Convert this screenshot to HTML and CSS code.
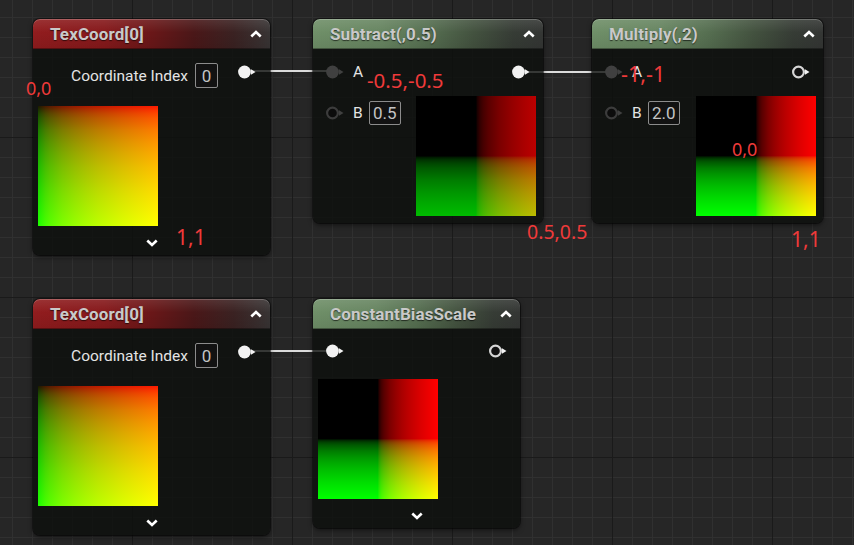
FILE: index.html
```html
<!DOCTYPE html>
<html>
<head>
<meta charset="utf-8">
<link rel="stylesheet" href="styles.css">
</head>
<body>
<div class="canvas">
  <div class="wire w1"></div>
  <div class="wire w2"></div>
  <div class="wire w3"></div>

  <!-- TexCoord top -->
  <div class="node n1">
    <div class="hdr hdr-red">
      <span class="title">TexCoord[0]</span>
      <svg class="chev" width="12" height="8" viewBox="0 0 12 8"><polyline points="1.3,6.5 6,2 10.7,6.5"/></svg>
    </div>
    <div class="body-tc">
      <div class="row-out">
        <span class="plabel">Coordinate Index</span>
        <span class="vbox vbox-sm">0</span>
        <svg class="pin pin-up" width="19" height="14" viewBox="0 0 19 14"><circle class="fill-w" cx="6.5" cy="7" r="6.4"/><polygon class="fill-w" points="13,4.2 17.5,7 13,9.8"/></svg>
      </div>
      <div class="preview prev-uv"></div>
      <div class="foot"><svg class="chev" width="12" height="8" viewBox="0 0 12 8"><polyline points="1.3,1.5 6,6 10.7,1.5"/></svg></div>
    </div>
  </div>

  <!-- Subtract -->
  <div class="node n2">
    <div class="hdr hdr-green">
      <span class="title">Subtract(,0.5)</span>
      <svg class="chev" width="12" height="8" viewBox="0 0 12 8"><polyline points="1.3,6.5 6,2 10.7,6.5"/></svg>
    </div>
    <div class="body-op">
      <div class="col-in">
        <div class="prow">
          <svg class="pin" width="19" height="14" viewBox="0 0 19 14"><circle class="fill-d" cx="6.5" cy="7" r="6.4"/><polygon class="fill-d" points="13,4.2 17.5,7 13,9.8"/></svg>
          <span class="plabel">A</span>
        </div>
        <div class="prow">
          <svg class="pin" width="19" height="14" viewBox="0 0 19 14"><circle class="ring-d" cx="6.5" cy="7" r="5.4"/><polygon class="fill-d" points="13,4.2 17.5,7 13,9.8"/></svg>
          <span class="plabel">B</span>
          <span class="vbox">0.5</span>
        </div>
      </div>
      <div class="col-out">
        <div class="prow">
          <svg class="pin" width="19" height="14" viewBox="0 0 19 14"><circle class="fill-w" cx="6.5" cy="7" r="6.4"/><polygon class="fill-w" points="13,4.2 17.5,7 13,9.8"/></svg>
        </div>
        <div class="preview prev-sub"></div>
      </div>
    </div>
  </div>

  <!-- Multiply -->
  <div class="node n3">
    <div class="hdr hdr-green">
      <span class="title">Multiply(,2)</span>
      <svg class="chev" width="12" height="8" viewBox="0 0 12 8"><polyline points="1.3,6.5 6,2 10.7,6.5"/></svg>
    </div>
    <div class="body-op">
      <div class="col-in">
        <div class="prow">
          <svg class="pin" width="19" height="14" viewBox="0 0 19 14"><circle class="fill-d" cx="6.5" cy="7" r="6.4"/><polygon class="fill-d" points="13,4.2 17.5,7 13,9.8"/></svg>
          <span class="plabel">A</span>
        </div>
        <div class="prow">
          <svg class="pin" width="19" height="14" viewBox="0 0 19 14"><circle class="ring-d" cx="6.5" cy="7" r="5.4"/><polygon class="fill-d" points="13,4.2 17.5,7 13,9.8"/></svg>
          <span class="plabel">B</span>
          <span class="vbox">2.0</span>
        </div>
      </div>
      <div class="col-out">
        <div class="prow">
          <svg class="pin" width="19" height="14" viewBox="0 0 19 14"><circle class="ring-w" cx="6.5" cy="7" r="5.4"/><polygon class="fill-w" points="13,4.2 17.5,7 13,9.8"/></svg>
        </div>
        <div class="preview prev-mul"></div>
      </div>
    </div>
  </div>

  <!-- TexCoord bottom -->
  <div class="node n4">
    <div class="hdr hdr-red">
      <span class="title">TexCoord[0]</span>
      <svg class="chev" width="12" height="8" viewBox="0 0 12 8"><polyline points="1.3,6.5 6,2 10.7,6.5"/></svg>
    </div>
    <div class="body-tc">
      <div class="row-out">
        <span class="plabel">Coordinate Index</span>
        <span class="vbox vbox-sm">0</span>
        <svg class="pin pin-up" width="19" height="14" viewBox="0 0 19 14"><circle class="fill-w" cx="6.5" cy="7" r="6.4"/><polygon class="fill-w" points="13,4.2 17.5,7 13,9.8"/></svg>
      </div>
      <div class="preview prev-uv"></div>
      <div class="foot"><svg class="chev" width="12" height="8" viewBox="0 0 12 8"><polyline points="1.3,1.5 6,6 10.7,1.5"/></svg></div>
    </div>
  </div>

  <!-- ConstantBiasScale -->
  <div class="node n5">
    <div class="hdr hdr-green">
      <span class="title">ConstantBiasScale</span>
      <svg class="chev" width="12" height="8" viewBox="0 0 12 8"><polyline points="1.3,6.5 6,2 10.7,6.5"/></svg>
    </div>
    <div class="body-cbs">
      <div class="row-io">
        <svg class="pin" width="19" height="14" viewBox="0 0 19 14"><circle class="fill-w" cx="6.5" cy="7" r="6.4"/><polygon class="fill-w" points="13,4.2 17.5,7 13,9.8"/></svg>
        <svg class="pin" width="19" height="14" viewBox="0 0 19 14"><circle class="ring-w" cx="6.5" cy="7" r="5.4"/><polygon class="fill-w" points="13,4.2 17.5,7 13,9.8"/></svg>
      </div>
      <div class="preview prev-mul"></div>
      <div class="foot foot-cbs"><svg class="chev" width="12" height="8" viewBox="0 0 12 8"><polyline points="1.3,1.5 6,6 10.7,1.5"/></svg></div>
    </div>
  </div>

  <!-- annotations -->
  <span class="anno a00">0,0</span>
  <span class="anno a11">1,1</span>
  <span class="anno asub">-0.5,-0.5</span>
  <span class="anno a55">0.5,0.5</span>
  <span class="anno amul">-1,-1</span>
  <span class="anno a00b">0,0</span>
  <span class="anno a11b">1,1</span>
</div>
</body>
</html>
```

FILE: styles.css
```css
html, body {
  margin: 0;
  padding: 0;
}
body {
  width: 854px;
  height: 545px;
  overflow: hidden;
  background-color: #262626;
  background-image:
    linear-gradient(to right, #1a1a1a 1px, transparent 1px),
    linear-gradient(to bottom, #1a1a1a 1px, transparent 1px),
    linear-gradient(to right, #303030 1px, transparent 1px),
    linear-gradient(to bottom, #303030 1px, transparent 1px);
  background-size: 160px 160px, 160px 160px, 20px 20px, 20px 20px;
  background-position: 132px 0, 0 137px, 12px 0, 0 17px;
  font-family: Roboto, "Liberation Sans", sans-serif;
}
.canvas {
  position: relative;
  width: 854px;
  height: 545px;
}

/* wires (behind nodes) */
.wire {
  position: absolute;
  height: 2px;
  background: #dcdcdc;
}
.w1 { left: 252px; top: 70px; width: 76px; }
.w2 { left: 526px; top: 71px; width: 82px; }
.w3 { left: 252px; top: 350px; width: 76px; }

/* nodes */
.node {
  position: absolute;
  display: flex;
  flex-direction: column;
  border-radius: 7px;
  background: rgba(13, 15, 13, 0.8);
  box-shadow: 0 2px 5px rgba(0, 0, 0, 0.55), 0 0 0 1px rgba(0, 0, 0, 0.45);
}
.n1 { left: 33px; top: 19px; width: 237px; height: 236px; }
.n2 { left: 313px; top: 19px; width: 230px; height: 204px; }
.n3 { left: 592px; top: 19px; width: 231px; height: 204px; }
.n4 { left: 33px; top: 299px; width: 237px; height: 236px; }
.n5 { left: 313px; top: 299px; width: 207px; height: 229px; }

.hdr {
  height: 30px;
  flex: none;
  display: flex;
  align-items: center;
  justify-content: space-between;
  padding: 0 8px 0 17px;
  border-radius: 7px 7px 0 0;
  box-shadow: inset 0 1px 0 rgba(255, 255, 255, 0.22), inset 0 -1px 0 rgba(0, 0, 0, 0.35);
}
.hdr-red {
  background:
    linear-gradient(to bottom, rgba(255, 255, 255, 0.10), rgba(255, 255, 255, 0) 45%, rgba(0, 0, 0, 0.08)),
    linear-gradient(to right, #911c1e 0%, #86191b 30%, #6a1718 50%, #4a1718 68%, #3a2222 85%, #383434 100%);
}
.hdr-green {
  background:
    linear-gradient(to bottom, rgba(255, 255, 255, 0.10), rgba(255, 255, 255, 0) 45%, rgba(0, 0, 0, 0.08)),
    linear-gradient(to right, #6f8f68 0%, #678561 30%, #566f51 50%, #43523f 70%, #363c35 87%, #343634 100%);
}
.title {
  color: #c9c9c9;
  font-weight: 700;
  font-size: 17px;
  letter-spacing: 0.1px;
  text-shadow: 0 1px 1px rgba(0, 0, 0, 0.6);
  white-space: nowrap;
}
.chev polyline {
  fill: none;
  stroke: #ffffff;
  stroke-width: 2.6;
  stroke-linecap: butt;
  stroke-linejoin: miter;
}

.plabel {
  color: #e4e4e4;
  font-size: 15.5px;
  white-space: nowrap;
}
.vbox {
  box-sizing: border-box;
  height: 24px;
  min-width: 32px;
  padding: 0 3px;
  border: 1px solid #8c8c8c;
  border-radius: 2px;
  background: #121212;
  color: #c4c4c4;
  font-size: 17px;
  display: inline-flex;
  align-items: center;
  justify-content: center;
}
.vbox-sm {
  min-width: 23px;
  height: 25px;
}

.pin { display: block; flex: none; }
.fill-w { fill: #f2f2f2; }
.fill-d { fill: #404040; }
.ring-w { fill: #121212; stroke: #d6d6d6; stroke-width: 2.2; }
.ring-d { fill: #0c0c0c; stroke: #3c3c3c; stroke-width: 2.2; }

/* TexCoord body */
.body-tc {
  flex: 1;
  display: flex;
  flex-direction: column;
  padding: 14px 0 0 5px;
}
.row-out {
  display: flex;
  align-items: center;
  justify-content: flex-end;
  height: 25px;
  padding-right: 13px;
}
.row-out .vbox { margin-left: 7px; }
.row-out .pin { margin-left: 20px; align-self: flex-start; margin-top: 2px; }
.body-tc .preview { margin-top: 18px; }
.foot {
  flex: 1;
  display: flex;
  align-items: center;
  justify-content: center;
  padding-top: 4px;
  padding-right: 5px;
}
.foot-cbs { padding-top: 5px; }

/* operator body */
.body-op {
  flex: 1;
  display: flex;
  padding-top: 11px;
}
.col-in {
  flex: 1;
  display: flex;
  flex-direction: column;
  gap: 17px;
  padding-left: 13px;
}
.prow {
  height: 24px;
  display: flex;
  align-items: center;
}
.prow .plabel { margin-left: 8px; }
.prow .vbox { margin-left: 6px; }
.col-out {
  width: 120px;
  margin-right: 7px;
  display: flex;
  flex-direction: column;
  align-items: flex-end;
}
.col-out .prow { padding-right: 5px; }
.col-out .preview { margin-top: 12px; }

/* ConstantBiasScale body */
.body-cbs {
  flex: 1;
  display: flex;
  flex-direction: column;
  padding: 10px 0 0 5px;
}
.row-io {
  height: 24px;
  display: flex;
  align-items: center;
  justify-content: space-between;
  padding: 0 12px 0 8px;
}
.body-cbs .preview { margin-top: 16px; }

/* previews */
.preview {
  width: 120px;
  height: 120px;
  flex: none;
  background-blend-mode: screen;
}
.prev-uv {
  background-image:
    linear-gradient(to right, rgb(25,0,0) 0%, rgb(48,0,0) 3%, rgb(69,0,0) 6%, rgb(89,0,0) 10%, rgb(124,0,0) 20%, rgb(149,0,0) 30%, rgb(170,0,0) 40%, rgb(188,0,0) 50%, rgb(203,0,0) 60%, rgb(218,0,0) 70%, rgb(231,0,0) 80%, rgb(243,0,0) 90%, rgb(255,0,0) 100%),
    linear-gradient(to bottom, rgb(0,25,0) 0%, rgb(0,48,0) 3%, rgb(0,69,0) 6%, rgb(0,89,0) 10%, rgb(0,124,0) 20%, rgb(0,149,0) 30%, rgb(0,170,0) 40%, rgb(0,188,0) 50%, rgb(0,203,0) 60%, rgb(0,218,0) 70%, rgb(0,231,0) 80%, rgb(0,243,0) 90%, rgb(0,255,0) 100%);
}
.prev-sub {
  background-image:
    linear-gradient(to right, #000 0%, #000 50%, rgb(25,0,0) 51%, rgb(48,0,0) 53%, rgb(69,0,0) 56%, rgb(89,0,0) 60%, rgb(124,0,0) 70%, rgb(149,0,0) 80%, rgb(170,0,0) 90%, rgb(188,0,0) 100%),
    linear-gradient(to bottom, #000 0%, #000 50%, rgb(0,25,0) 51%, rgb(0,48,0) 53%, rgb(0,69,0) 56%, rgb(0,89,0) 60%, rgb(0,124,0) 70%, rgb(0,149,0) 80%, rgb(0,170,0) 90%, rgb(0,188,0) 100%);
}
.prev-mul {
  background-image:
    linear-gradient(to right, #000 0%, #000 50%, rgb(25,0,0) 50.5%, rgb(48,0,0) 51.5%, rgb(69,0,0) 53%, rgb(89,0,0) 55%, rgb(124,0,0) 60%, rgb(149,0,0) 65%, rgb(170,0,0) 70%, rgb(188,0,0) 75%, rgb(203,0,0) 80%, rgb(218,0,0) 85%, rgb(231,0,0) 90%, rgb(243,0,0) 95%, rgb(255,0,0) 100%),
    linear-gradient(to bottom, #000 0%, #000 50%, rgb(0,25,0) 50.5%, rgb(0,48,0) 51.5%, rgb(0,69,0) 53%, rgb(0,89,0) 55%, rgb(0,124,0) 60%, rgb(0,149,0) 65%, rgb(0,170,0) 70%, rgb(0,188,0) 75%, rgb(0,203,0) 80%, rgb(0,218,0) 85%, rgb(0,231,0) 90%, rgb(0,243,0) 95%, rgb(0,255,0) 100%);
}

/* red annotations */
.anno {
  position: absolute;
  color: #ef3a3a;
  font-family: "Noto Sans", "Open Sans", sans-serif;
  line-height: 1;
  white-space: nowrap;
}
.a00  { left: 26px;  top: 79px;  font-size: 18px; }
.a11  { left: 176px; top: 227px; font-size: 21px; }
.asub { left: 367px; top: 70px;  font-size: 20.5px; }
.a55  { left: 527px; top: 222px; font-size: 19.5px; }
.amul { left: 621px; top: 63px;  font-size: 21.5px; }
.a00b { left: 732px; top: 140px; font-size: 18px; }
.a11b { left: 791px; top: 229px; font-size: 21px; }
```
